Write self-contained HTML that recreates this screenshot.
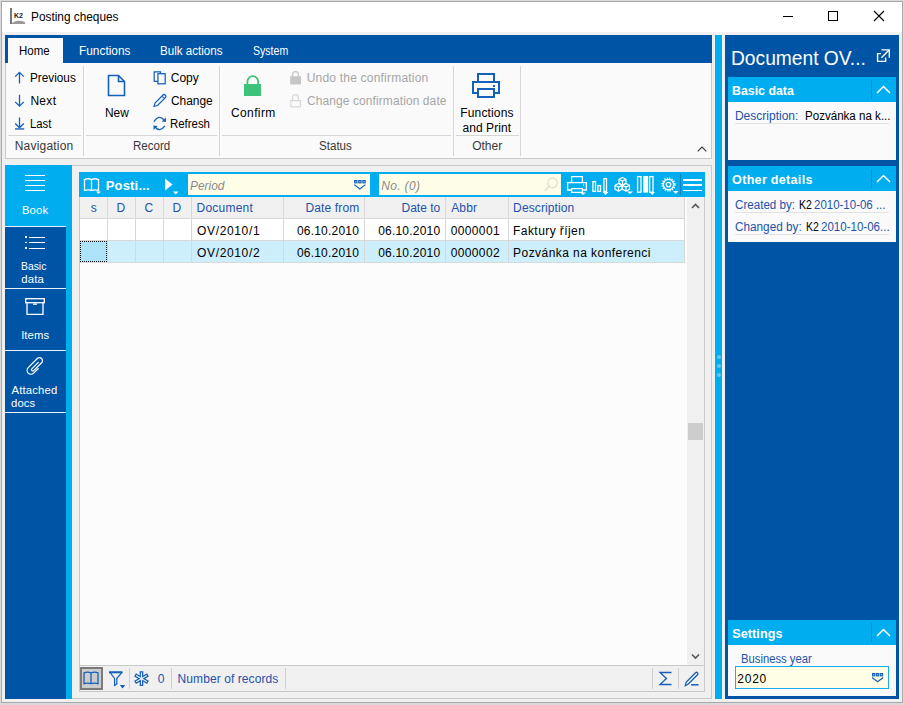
<!DOCTYPE html>
<html><head><meta charset="utf-8"><style>
html,body{margin:0;padding:0;width:904px;height:705px;overflow:hidden;background:#dadada}
body>div,body>svg,body>span{position:absolute;display:block}
span{font-family:"Liberation Sans",sans-serif;white-space:nowrap}
svg{overflow:visible}
</style></head><body>
<div style="left:0px;top:0px;width:904px;height:705px;background:#dadada;"></div>
<div style="left:1px;top:1px;width:902px;height:702px;background:#a9a9a9;"></div>
<div style="left:2px;top:2px;width:900px;height:700px;background:#f0f0f0;"></div>
<div style="left:2px;top:2px;width:900px;height:30px;background:#ffffff;"></div>
<div style="left:783px;top:16px;width:10px;height:1px;background:#000;"></div>
<div style="left:828px;top:11px;width:10px;height:10px;border:1px solid #000;box-sizing:border-box;"></div>
<div style="left:5px;top:35px;width:707px;height:28px;background:#0054a6;"></div>
<div style="left:5px;top:63px;width:707px;height:96px;background:#fafafa;border:1px solid #c9c9c9;border-top:none;box-sizing:border-box;"></div>
<div style="left:8px;top:38px;width:55px;height:26px;background:#fafafa;"></div>
<div style="left:83px;top:66px;width:1px;height:90px;background:#d6d6d6;"></div>
<div style="left:219px;top:66px;width:1px;height:90px;background:#d6d6d6;"></div>
<div style="left:453px;top:66px;width:1px;height:90px;background:#d6d6d6;"></div>
<div style="left:520px;top:66px;width:1px;height:90px;background:#d6d6d6;"></div>
<div style="left:8px;top:135px;width:73px;height:1px;background:#d6d6d6;"></div>
<div style="left:86px;top:135px;width:131px;height:1px;background:#d6d6d6;"></div>
<div style="left:222px;top:135px;width:229px;height:1px;background:#d6d6d6;"></div>
<div style="left:456px;top:135px;width:63px;height:1px;background:#d6d6d6;"></div>
<div style="left:72px;top:165px;width:640px;height:534px;background:#f0f0f0;border-top:1px solid #c9c9c9;border-right:1px solid #c9c9c9;border-bottom:1px solid #c9c9c9;box-sizing:border-box;"></div>
<div style="left:5px;top:165px;width:67px;height:534px;background:#00aeef;"></div>
<div style="left:5px;top:227px;width:61px;height:472px;background:#0054a6;"></div>
<div style="left:5px;top:226px;width:61px;height:1px;background:#e8f4fb;"></div>
<div style="left:5px;top:288px;width:61px;height:1px;background:#e8f4fb;"></div>
<div style="left:5px;top:350px;width:61px;height:1px;background:#e8f4fb;"></div>
<div style="left:5px;top:412px;width:61px;height:1px;background:#e8f4fb;"></div>
<div style="left:25px;top:175px;width:20px;height:1.2px;background:#fff;"></div>
<div style="left:25px;top:180px;width:20px;height:1.2px;background:#fff;"></div>
<div style="left:25px;top:185px;width:20px;height:1.2px;background:#fff;"></div>
<div style="left:25px;top:190px;width:20px;height:1.2px;background:#fff;"></div>
<div style="left:25px;top:236.3px;width:1.5px;height:1.5px;background:#fff;"></div>
<div style="left:29px;top:236.5px;width:16px;height:1.2px;background:#fff;"></div>
<div style="left:25px;top:241.8px;width:1.5px;height:1.5px;background:#fff;"></div>
<div style="left:29px;top:242.0px;width:16px;height:1.2px;background:#fff;"></div>
<div style="left:25px;top:247.3px;width:1.5px;height:1.5px;background:#fff;"></div>
<div style="left:29px;top:247.5px;width:16px;height:1.2px;background:#fff;"></div>
<div style="left:79px;top:172px;width:626px;height:520px;background:#fcfcfc;border:1px solid #c9c9c9;border-top:none;box-sizing:border-box;"></div>
<div style="left:79px;top:172px;width:626px;height:25px;background:#00aeef;"></div>
<div style="left:188px;top:174px;width:182px;height:21px;background:#fefee8;"></div>
<div style="left:379px;top:174px;width:182px;height:21px;background:#fefee8;"></div>
<div style="left:680px;top:174px;width:1px;height:21px;background:#1a7fb8;"></div>
<div style="left:683px;top:179.0px;width:19px;height:1.5px;background:#fff;"></div>
<div style="left:683px;top:184.3px;width:19px;height:1.5px;background:#fff;"></div>
<div style="left:683px;top:189.6px;width:19px;height:1.5px;background:#fff;"></div>
<div style="left:80px;top:197px;width:605px;height:22px;background:#f0f0f0;"></div>
<div style="left:80px;top:218px;width:605px;height:1px;background:#d8d8d8;"></div>
<div style="left:80px;top:219px;width:605px;height:22px;background:#ffffff;"></div>
<div style="left:80px;top:240px;width:605px;height:1px;background:#d8d8d8;"></div>
<div style="left:80px;top:241px;width:605px;height:21px;background:#cdeefb;"></div>
<div style="left:80px;top:262px;width:605px;height:1px;background:#d8d8d8;"></div>
<div style="left:80px;top:241px;width:27px;height:21px;background:#ade3f9;"></div>
<div style="left:80px;top:241px;width:27px;height:21px;border:1px dotted #111;box-sizing:border-box;"></div>
<div style="left:107px;top:197px;width:1px;height:66px;background:#d8d8d8;"></div>
<div style="left:135px;top:197px;width:1px;height:66px;background:#d8d8d8;"></div>
<div style="left:163px;top:197px;width:1px;height:66px;background:#d8d8d8;"></div>
<div style="left:191px;top:197px;width:1px;height:66px;background:#d8d8d8;"></div>
<div style="left:283px;top:197px;width:1px;height:66px;background:#d8d8d8;"></div>
<div style="left:364px;top:197px;width:1px;height:66px;background:#d8d8d8;"></div>
<div style="left:445px;top:197px;width:1px;height:66px;background:#d8d8d8;"></div>
<div style="left:508px;top:197px;width:1px;height:66px;background:#d8d8d8;"></div>
<div style="left:684px;top:197px;width:1px;height:66px;background:#d8d8d8;"></div>
<div style="left:687px;top:197px;width:17px;height:468px;background:#f0f0f0;"></div>
<div style="left:688px;top:423px;width:15px;height:17px;background:#cdcdcd;"></div>
<div style="left:80px;top:665px;width:624px;height:1px;background:#c9c9c9;"></div>
<div style="left:80px;top:666px;width:624px;height:25px;background:#f0f0f0;"></div>
<div style="left:80px;top:667px;width:23px;height:23px;background:#cccccc;border:2px solid #7a7a7a;box-sizing:border-box;"></div>
<div style="left:129px;top:668px;width:1px;height:21px;background:#cfcfcf;"></div>
<div style="left:171px;top:668px;width:1px;height:21px;background:#cfcfcf;"></div>
<div style="left:285px;top:668px;width:1px;height:21px;background:#cfcfcf;"></div>
<div style="left:652px;top:668px;width:1px;height:21px;background:#cfcfcf;"></div>
<div style="left:678px;top:668px;width:1px;height:21px;background:#cfcfcf;"></div>
<div style="left:715px;top:35px;width:7px;height:664px;background:#00aeef;"></div>
<div style="left:716.5px;top:355px;width:4px;height:4px;background:#5ccaf4;border-radius:50%;"></div>
<div style="left:716.5px;top:364px;width:4px;height:4px;background:#5ccaf4;border-radius:50%;"></div>
<div style="left:716.5px;top:373px;width:4px;height:4px;background:#5ccaf4;border-radius:50%;"></div>
<div style="left:725px;top:35px;width:174px;height:664px;background:#0054a6;"></div>
<div style="left:728px;top:77px;width:168px;height:25px;background:#00aeef;"></div>
<div style="left:871px;top:80px;width:1px;height:19px;background:#0a8cc8;"></div>
<div style="left:728px;top:102px;width:168px;height:58px;background:#fafafa;"></div>
<div style="left:735px;top:123px;width:154px;height:1px;background:#e2e2e2;"></div>
<div style="left:728px;top:166px;width:168px;height:25px;background:#00aeef;"></div>
<div style="left:871px;top:169px;width:1px;height:19px;background:#0a8cc8;"></div>
<div style="left:728px;top:191px;width:168px;height:51px;background:#fafafa;"></div>
<div style="left:735px;top:212px;width:154px;height:1px;background:#e2e2e2;"></div>
<div style="left:735px;top:234px;width:154px;height:1px;background:#e2e2e2;"></div>
<div style="left:728px;top:620px;width:168px;height:25px;background:#00aeef;"></div>
<div style="left:871px;top:623px;width:1px;height:19px;background:#0a8cc8;"></div>
<div style="left:728px;top:645px;width:168px;height:51px;background:#fafafa;"></div>
<div style="left:735px;top:666px;width:154px;height:23px;background:#fefee6;border:1px solid #19aef0;box-sizing:border-box;"></div>
<svg style="left:9px;top:7px;" width="18" height="18" viewBox="0 0 18 18"><rect x="1" y="1" width="2" height="16" fill="#777"/><text x="5" y="11" font-family="Liberation Sans" font-weight="700" font-size="7" fill="#222">K2</text><path d="M3 16 Q8 12 16 15 L16 17 L3 17Z" fill="#999"/></svg>
<svg style="left:873px;top:10px;" width="12" height="12" viewBox="0 0 12 12"><path d="M1 1 L11 11 M11 1 L1 11" stroke="#000" stroke-width="1.1"/></svg>
<svg style="left:13px;top:71px;" width="13" height="14" viewBox="0 0 13 14"><path d="M6.5 1.2 V12.5 M2.2 5.6 L6.5 1.3 L10.8 5.6" stroke="#1560b8" stroke-width="1.3" fill="none"/></svg>
<svg style="left:13px;top:94px;" width="13" height="14" viewBox="0 0 13 14"><path d="M6.5 0.8 V12.2 M2.2 7.9 L6.5 12.2 L10.8 7.9" stroke="#1560b8" stroke-width="1.3" fill="none"/></svg>
<svg style="left:13px;top:117px;" width="13" height="14" viewBox="0 0 13 14"><path d="M6.5 0.5 V10.8 M2.2 6.5 L6.5 10.8 L10.8 6.5" stroke="#1560b8" stroke-width="1.3" fill="none"/><rect x="2" y="11" width="9.2" height="1.8" fill="#4a84cc"/></svg>
<svg style="left:107px;top:74px;" width="20" height="24" viewBox="0 0 20 24"><path d="M1.5 1.5 H11.5 L17.5 7.5 V21.5 H1.5 Z M11.5 1.5 V7.5 H17.5" stroke="#1560b8" stroke-width="1.6" fill="none" stroke-linejoin="miter"/></svg>
<svg style="left:152px;top:70px;" width="15" height="15" viewBox="0 0 15 15"><path d="M5.9 11.4 H2.2 V1.9 H8.5 V3.7" stroke="#1560b8" stroke-width="1.25" fill="none"/><rect x="5.9" y="3.7" width="7.3" height="10.1" stroke="#1560b8" stroke-width="1.25" fill="none"/></svg>
<svg style="left:152px;top:93px;" width="15" height="15" viewBox="0 0 15 15"><path d="M2 13.5 L3 10 L11 2 Q12 1 13 2 L13.5 2.5 Q14.5 3.5 13.5 4.5 L5.5 12.5 Z M10 3.2 L12.5 5.7" stroke="#1560b8" stroke-width="1.2" fill="none"/></svg>
<svg style="left:152px;top:116px;" width="16" height="16" viewBox="0 0 16 16"><path d="M1.9 5.6 Q7.1 -2.2 12.4 4.4 M2.6 10.5 Q7.6 17 12.9 9.9" stroke="#1560b8" stroke-width="1.3" fill="none"/><path d="M14 6 L9.8 5.6 L13.8 1.5Z M1.4 9.6 L5.6 10 L1.6 14.1Z" fill="#1560b8"/></svg>
<svg style="left:243px;top:74px;" width="20" height="23" viewBox="0 0 20 23"><path d="M4.4 10.5 V7.6 A5.4 5.4 0 0 1 15.2 7.6 V10.5" stroke="#3cc27a" stroke-width="1.8" fill="none"/><rect x="1" y="10" width="17" height="12" fill="#3cc27a"/></svg>
<svg style="left:289px;top:70px;" width="13" height="16" viewBox="0 0 13 16"><path d="M3.6 7 V4.6 A2.9 2.9 0 0 1 9.4 4.6 V7" stroke="#c6c6c6" stroke-width="1.3" fill="none"/><rect x="1.2" y="6.2" width="10.8" height="8.2" fill="#c6c6c6"/></svg>
<svg style="left:289px;top:93px;" width="13" height="16" viewBox="0 0 13 16"><path d="M3.6 7.6 V4.6 A2.9 2.9 0 0 1 9.4 4.6 V7.6" stroke="#d8d8d8" stroke-width="1.2" fill="none"/><rect x="1.8" y="7.6" width="9.6" height="6.2" stroke="#d8d8d8" stroke-width="1.2" fill="none"/></svg>
<svg style="left:472px;top:73px;" width="29" height="26" viewBox="0 0 29 26"><g stroke="#1560b8" stroke-width="2" fill="none"><rect x="6" y="1" width="16" height="8"/><path d="M6 20 H1 V9 H27 V20 H22"/><rect x="6" y="16" width="16" height="8"/></g><rect x="21" y="12" width="2" height="2" fill="#1560b8"/></svg>
<svg style="left:697px;top:146px;" width="10" height="6" viewBox="0 0 10 6"><path d="M0.7 5.3 L5 1 L9.3 5.3" stroke="#333" stroke-width="1.1" fill="none"/></svg>
<svg style="left:25px;top:298px;" width="20" height="18" viewBox="0 0 20 18"><g stroke="#fff" stroke-width="1.3" fill="none"><rect x="0.7" y="0.7" width="18.6" height="4"/><path d="M2 4.7 V16.3 H18 V4.7"/></g><rect x="8" y="5.5" width="4" height="1.3" fill="#fff"/></svg>
<svg style="left:20px;top:352px;" width="30" height="30" viewBox="0 0 30 30"><path d="M4.5 -1 V7 A4.5 4.5 0 0 1 -4.5 7 V-8 A3.5 3.5 0 0 1 2.5 -8 V5 A1.5 1.5 0 0 1 -0.5 5 V-6" stroke="#fff" stroke-width="1.4" fill="none" transform="translate(15.2,14.1) rotate(45) scale(0.86)"/></svg>
<svg style="left:83px;top:177px;" width="20" height="19" viewBox="0 0 20 19"><path d="M1.5 2.5 Q5 1 8.5 2.5 Q12 1 15.5 2.5 V13.5 Q12 12.3 8.5 13.5 Q5 12.3 1.5 13.5 Z M8.5 2.5 V13.5" stroke="#fff" stroke-width="1.3" fill="none"/><path d="M13 14.5 H18 L15.5 17 Z" fill="#fff"/></svg>
<svg style="left:164px;top:177px;" width="16" height="19" viewBox="0 0 16 19"><path d="M1 1.5 L8.5 7.5 L1 13.5 Z" fill="#fff"/><path d="M9 14.5 H14.5 L11.75 17.5 Z" fill="#fff"/></svg>
<svg style="left:352px;top:178px;" width="15" height="13" viewBox="0 0 15 13"><g stroke="#1560b8" stroke-width="1" fill="#7fa6da"><rect x="2.6" y="2.5" width="2.4" height="2.4"/><rect x="6.7" y="2.5" width="2.4" height="2.4"/><rect x="10.8" y="2.5" width="2.4" height="2.4"/></g><path d="M2.2 6.6 L7.8 11 L13.4 6.6" stroke="#1560b8" stroke-width="1.2" fill="none"/></svg>
<svg style="left:543px;top:177px;" width="16" height="15" viewBox="0 0 16 15"><circle cx="9.5" cy="6" r="4.8" stroke="#dcdcd4" stroke-width="1.2" fill="none"/><path d="M6.2 9.3 L1.8 13.7" stroke="#dcdcd4" stroke-width="1.3"/></svg>
<svg style="left:560px;top:170px;" width="30" height="30" viewBox="0 0 30 30"><g stroke="#fff" stroke-width="1.3" fill="none"><path d="M11.6 12 V6.6 H22.4 V12"/><path d="M11.6 20 H7.6 V12.6 H26.4 V20 H22.4"/><rect x="11.6" y="18.6" width="10.8" height="3.8"/></g><rect x="23" y="14.5" width="1.2" height="1.2" fill="#fff"/><path d="M20 22.5 H26 L23 25Z" fill="#fff"/></svg>
<svg style="left:590px;top:170px;" width="20" height="30" viewBox="0 0 20 30"><g stroke="#fff" stroke-width="1.3" fill="none"><rect x="2.9" y="11.6" width="2.6" height="9.8"/><rect x="7.9" y="15.6" width="2.6" height="5.8"/><rect x="13.9" y="8.6" width="2.6" height="12.8"/></g><path d="M12.5 22 H18.5 L15.5 25Z" fill="#fff"/></svg>
<svg style="left:612px;top:170px;" width="22" height="30" viewBox="0 0 22 30"><g stroke="#fff" stroke-width="1.2" fill="none" stroke-linejoin="round"><path d="M10.5 7.5 L14 9.3 V13.3 L10.5 15.1 L7 13.3 V9.3 Z M7 9.3 L10.5 11.1 L14 9.3 M10.5 11.1 V15.1"/><path d="M6.5 13.5 L10 15.3 V19.3 L6.5 21.1 L3 19.3 V15.3 Z M3 15.3 L6.5 17.1 L10 15.3 M6.5 17.1 V21.1"/><path d="M14 13.5 L17.5 15.3 V19.3 L14 21.1 L10.5 19.3 V15.3 Z M10.5 15.3 L14 17.1 L17.5 15.3 M14 17.1 V21.1"/></g><path d="M15 21.5 H21 L18 24Z" fill="#fff"/></svg>
<svg style="left:634px;top:170px;" width="24" height="30" viewBox="0 0 24 30"><g stroke="#fff" stroke-width="1.3" fill="none"><rect x="3.6" y="6.6" width="3.4" height="15.6"/><rect x="15.6" y="6.6" width="3.4" height="15.6"/></g><rect x="9.3" y="6" width="4.8" height="16.6" fill="#fff"/><path d="M15.5 22 H21 L18.25 25Z" fill="#fff"/></svg>
<svg style="left:658px;top:170px;" width="24" height="30" viewBox="0 0 24 30"><circle cx="10.5" cy="14.6" r="5.2" stroke="#fff" stroke-width="1.4" fill="none"/><circle cx="10.5" cy="14.6" r="6.3" stroke="#fff" stroke-width="1.6" fill="none" stroke-dasharray="1.2 1.27"/><circle cx="10.5" cy="14.6" r="2.2" stroke="#fff" stroke-width="1.3" fill="none"/><path d="M15 21 H20.5 L17.75 24Z" fill="#fff"/></svg>
<svg style="left:691px;top:202px;" width="10" height="8" viewBox="0 0 10 8"><path d="M1 6 L4.5 2.5 L8 6" stroke="#555" stroke-width="1.6" fill="none"/></svg>
<svg style="left:691px;top:652px;" width="10" height="9" viewBox="0 0 10 9"><path d="M1 2.5 L4.5 6 L8 2.5" stroke="#555" stroke-width="1.6" fill="none"/></svg>
<svg style="left:83px;top:671px;" width="17" height="15" viewBox="0 0 17 15"><path d="M1 1.8 Q4.5 0.6 8 1.8 Q11.5 0.6 15 1.8 V12.6 Q11.5 11.6 8 12.6 Q4.5 11.6 1 12.6 Z M8 1.8 V12.6" stroke="#1560b8" stroke-width="1.3" fill="none"/></svg>
<svg style="left:104px;top:666px;" width="25" height="25" viewBox="0 0 25 25"><path d="M5.5 6.3 H18 M6 6.3 L10.6 12.5 V19.5 M12.8 18 V12.5 L18 6.3" stroke="#1560b8" stroke-width="1.2" fill="none" stroke-linejoin="round"/><path d="M10 20 L13.2 17.5" stroke="#1560b8" stroke-width="1.2"/><rect x="5" y="5.3" width="13.5" height="2" fill="#1560b8"/><path d="M15.8 19 H21.3 L18.55 22.4Z" fill="#1560b8"/></svg>
<svg style="left:128px;top:666px;" width="28" height="25" viewBox="0 0 28 25"><g stroke-linecap="square"><path d="M13.5 7 V18.3 M8.6 9.8 L18.4 15.5 M8.6 15.5 L18.4 9.8" stroke="#1560b8" stroke-width="3.6"/><path d="M13.5 7 V18.3 M8.6 9.8 L18.4 15.5 M8.6 15.5 L18.4 9.8" stroke="#f0f0f0" stroke-width="1.1"/></g></svg>
<svg style="left:658px;top:671px;" width="15" height="15" viewBox="0 0 15 15"><path d="M13.5 1.5 H2 L8.5 7.5 L2 13.5 H13.5" stroke="#1560b8" stroke-width="1.3" fill="none"/></svg>
<svg style="left:684px;top:670px;" width="16" height="17" viewBox="0 0 16 17"><path d="M1.3 15.7 L2.3 12 L11.5 2.8 Q12.5 1.8 13.5 2.8 Q14.5 3.8 13.5 4.8 L4.3 14 Z" stroke="#1560b8" stroke-width="1.3" fill="none"/><path d="M7 14.8 H14.5" stroke="#1560b8" stroke-width="1.5"/></svg>
<svg style="left:875px;top:48px;" width="16" height="16" viewBox="0 0 16 16"><g stroke="#fff" stroke-width="1.4" fill="none"><path d="M6 5.6 H2.6 V13.4 H10.6 V9.6"/><path d="M6.5 1.9 H14.3 V9.7"/><path d="M13.9 2.3 L6.4 9.8"/></g></svg>
<svg style="left:876px;top:85px;" width="15" height="9" viewBox="0 0 15 9"><path d="M1 8 L7.5 1.5 L14 8" stroke="#fff" stroke-width="1.5" fill="none"/></svg>
<svg style="left:876px;top:174px;" width="15" height="9" viewBox="0 0 15 9"><path d="M1 8 L7.5 1.5 L14 8" stroke="#fff" stroke-width="1.5" fill="none"/></svg>
<svg style="left:876px;top:628px;" width="15" height="9" viewBox="0 0 15 9"><path d="M1 8 L7.5 1.5 L14 8" stroke="#fff" stroke-width="1.5" fill="none"/></svg>
<svg style="left:870px;top:672px;" width="15" height="12" viewBox="0 0 15 12"><g stroke="#1560b8" stroke-width="1" fill="#7fa6da"><rect x="2.5" y="1.5" width="2.4" height="2.4"/><rect x="6.4" y="1.5" width="2.4" height="2.4"/><rect x="10.3" y="1.5" width="2.4" height="2.4"/></g><path d="M2 5.5 L7.6 9.8 L13.2 5.5" stroke="#1560b8" stroke-width="1.2" fill="none"/></svg>
<span style="left:30.63px;top:2px;font-size:12px;line-height:30px;color:#000;transform:scaleX(0.986);transform-origin:0 0;">Posting cheques</span>
<span style="left:19.26px;top:36px;font-size:12px;line-height:30px;color:#000;transform:scaleX(0.958);transform-origin:0 0;">Home</span>
<span style="left:79.43px;top:36px;font-size:12px;line-height:30px;color:#fff;transform:scaleX(0.990);transform-origin:0 0;">Functions</span>
<span style="left:160.35px;top:36px;font-size:12px;line-height:30px;color:#fff;transform:scaleX(0.967);transform-origin:0 0;">Bulk actions</span>
<span style="left:253.12px;top:36px;font-size:12px;line-height:30px;color:#fff;transform:scaleX(0.879);transform-origin:0 0;">System</span>
<span style="left:30.43px;top:63px;font-size:12px;line-height:30px;color:#000;transform:scaleX(0.981);transform-origin:0 0;">Previous</span>
<span style="left:30.42px;top:86px;font-size:12px;line-height:30px;color:#000;letter-spacing:0.30px;">Next</span>
<span style="left:30.47px;top:109px;font-size:12px;line-height:30px;color:#000;transform:scaleX(0.944);transform-origin:0 0;">Last</span>
<span style="left:14.72px;top:131px;font-size:12px;line-height:30px;color:#383838;letter-spacing:0.20px;">Navigation</span>
<span style="left:104.92px;top:98px;font-size:12px;line-height:30px;color:#000;transform:scaleX(0.993);transform-origin:0 0;">New</span>
<span style="left:170.79px;top:63px;font-size:12px;line-height:30px;color:#000;">Copy</span>
<span style="left:170.79px;top:86px;font-size:12px;line-height:30px;color:#000;transform:scaleX(0.993);transform-origin:0 0;">Change</span>
<span style="left:170.46px;top:109px;font-size:12px;line-height:30px;color:#000;transform:scaleX(0.951);transform-origin:0 0;">Refresh</span>
<span style="left:132.85px;top:131px;font-size:12px;line-height:30px;color:#383838;transform:scaleX(0.964);transform-origin:0 0;">Record</span>
<span style="left:230.99px;top:98px;font-size:12px;line-height:30px;color:#000;letter-spacing:0.38px;">Confirm</span>
<span style="left:306.67px;top:63px;font-size:12px;line-height:30px;color:#a6a6a6;letter-spacing:0.21px;">Undo the confirmation</span>
<span style="left:306.99px;top:86px;font-size:12px;line-height:30px;color:#a6a6a6;letter-spacing:0.09px;">Change confirmation date</span>
<span style="left:319.47px;top:131px;font-size:12px;line-height:30px;color:#383838;transform:scaleX(0.965);transform-origin:0 0;">Status</span>
<span style="left:460.32px;top:98px;font-size:12px;line-height:30px;color:#000;letter-spacing:0.14px;">Functions</span>
<span style="left:462.49px;top:113px;font-size:12px;line-height:30px;color:#000;letter-spacing:0.06px;">and Print</span>
<span style="left:472.13px;top:131px;font-size:12px;line-height:30px;color:#383838;letter-spacing:0.01px;">Other</span>
<span style="left:21.97px;top:195px;font-size:11.3px;line-height:30px;color:#fff;letter-spacing:0.12px;">Book</span>
<span style="left:20.95px;top:251px;font-size:11.3px;line-height:30px;color:#fff;transform:scaleX(0.916);transform-origin:0 0;">Basic</span>
<span style="left:21.33px;top:264px;font-size:11.3px;line-height:30px;color:#fff;letter-spacing:0.19px;">data</span>
<span style="left:21.16px;top:320px;font-size:11.3px;line-height:30px;color:#fff;letter-spacing:0.08px;">Items</span>
<span style="left:11.48px;top:375px;font-size:11.3px;line-height:30px;color:#fff;letter-spacing:0.18px;">Attached</span>
<span style="left:11.03px;top:388px;font-size:11.3px;line-height:30px;color:#fff;letter-spacing:0.10px;">docs</span>
<span style="left:105.73px;top:171px;font-size:13px;line-height:30px;color:#fff;letter-spacing:0.18px;font-weight:700;">Posti...</span>
<span style="left:190.23px;top:171px;font-size:12px;line-height:30px;color:#8a8a8a;transform:scaleX(0.990);transform-origin:0 0;font-style:italic;">Period</span>
<span style="left:381.23px;top:171px;font-size:12px;line-height:30px;color:#8a8a8a;letter-spacing:0.34px;font-style:italic;">No. (0)</span>
<span style="left:90.85px;top:193px;font-size:12px;line-height:30px;color:#2252ab;">s</span>
<span style="left:116.46px;top:193px;font-size:12px;line-height:30px;color:#2252ab;">D</span>
<span style="left:144.59px;top:193px;font-size:12px;line-height:30px;color:#2252ab;">C</span>
<span style="left:172.46px;top:193px;font-size:12px;line-height:30px;color:#2252ab;">D</span>
<span style="left:196.62px;top:193px;font-size:12px;line-height:30px;color:#2252ab;letter-spacing:0.21px;">Document</span>
<span style="left:305.42px;top:193px;font-size:12px;line-height:30px;color:#2252ab;letter-spacing:0.14px;">Date from</span>
<span style="left:401.52px;top:193px;font-size:12px;line-height:30px;color:#2252ab;">Date to</span>
<span style="left:451.18px;top:193px;font-size:12px;line-height:30px;color:#2252ab;letter-spacing:0.16px;">Abbr</span>
<span style="left:513.12px;top:193px;font-size:12px;line-height:30px;color:#2252ab;letter-spacing:0.11px;">Description</span>
<span style="left:197.03px;top:216px;font-size:12px;line-height:30px;color:#000;letter-spacing:0.65px;">OV/2010/1</span>
<span style="left:296.93px;top:216px;font-size:12px;line-height:30px;color:#000;letter-spacing:0.21px;">06.10.2010</span>
<span style="left:378.13px;top:216px;font-size:12px;line-height:30px;color:#000;letter-spacing:0.21px;">06.10.2010</span>
<span style="left:450.73px;top:216px;font-size:12px;line-height:30px;color:#000;letter-spacing:0.36px;">0000001</span>
<span style="left:513.12px;top:216px;font-size:12px;line-height:30px;color:#000;letter-spacing:0.42px;">Faktury říjen</span>
<span style="left:197.03px;top:238px;font-size:12px;line-height:30px;color:#000;letter-spacing:0.65px;">OV/2010/2</span>
<span style="left:296.93px;top:238px;font-size:12px;line-height:30px;color:#000;letter-spacing:0.21px;">06.10.2010</span>
<span style="left:378.13px;top:238px;font-size:12px;line-height:30px;color:#000;letter-spacing:0.21px;">06.10.2010</span>
<span style="left:450.73px;top:238px;font-size:12px;line-height:30px;color:#000;letter-spacing:0.36px;">0000002</span>
<span style="left:513.12px;top:238px;font-size:12px;line-height:30px;color:#000;letter-spacing:0.44px;">Pozvánka na konferenci</span>
<span style="left:157.73px;top:664px;font-size:12px;line-height:30px;color:#2252ab;">0</span>
<span style="left:177.62px;top:664px;font-size:12px;line-height:30px;color:#2252ab;letter-spacing:0.08px;">Number of records</span>
<span style="left:730.62px;top:43px;font-size:20px;line-height:30px;color:#fff;transform:scaleX(0.960);transform-origin:0 0;">Document OV...</span>
<span style="left:731.77px;top:76px;font-size:12.6px;line-height:30px;color:#fff;transform:scaleX(0.981);transform-origin:0 0;font-weight:700;">Basic data</span>
<span style="left:734.92px;top:101px;font-size:12px;line-height:30px;color:#2252ab;letter-spacing:0.01px;">Description:</span>
<span style="left:804.55px;top:101px;font-size:12px;line-height:30px;color:#000;transform:scaleX(0.964);transform-origin:0 0;">Pozvánka na k...</span>
<span style="left:732.08px;top:165px;font-size:12.6px;line-height:30px;color:#fff;letter-spacing:0.28px;font-weight:700;">Other details</span>
<span style="left:735.31px;top:190px;font-size:12px;line-height:30px;color:#2252ab;transform:scaleX(0.968);transform-origin:0 0;">Created by:</span>
<span style="left:798.54px;top:190px;font-size:12px;line-height:30px;color:#000;transform:scaleX(0.871);transform-origin:0 0;">K2</span>
<span style="left:814.42px;top:190px;font-size:12px;line-height:30px;color:#2252ab;transform:scaleX(0.957);transform-origin:0 0;">2010-10-06 ...</span>
<span style="left:735.30px;top:212px;font-size:12px;line-height:30px;color:#2252ab;transform:scaleX(0.980);transform-origin:0 0;">Changed by:</span>
<span style="left:805.64px;top:212px;font-size:12px;line-height:30px;color:#000;transform:scaleX(0.871);transform-origin:0 0;">K2</span>
<span style="left:821.42px;top:212px;font-size:12px;line-height:30px;color:#2252ab;transform:scaleX(0.961);transform-origin:0 0;">2010-10-06...</span>
<span style="left:732.24px;top:619px;font-size:12.6px;line-height:30px;color:#fff;letter-spacing:0.08px;font-weight:700;">Settings</span>
<span style="left:741.48px;top:644px;font-size:12px;line-height:30px;color:#2252ab;transform:scaleX(0.938);transform-origin:0 0;">Business year</span>
<span style="left:737.30px;top:664px;font-size:12px;line-height:30px;color:#000;letter-spacing:0.76px;">2020</span>
</body></html>
